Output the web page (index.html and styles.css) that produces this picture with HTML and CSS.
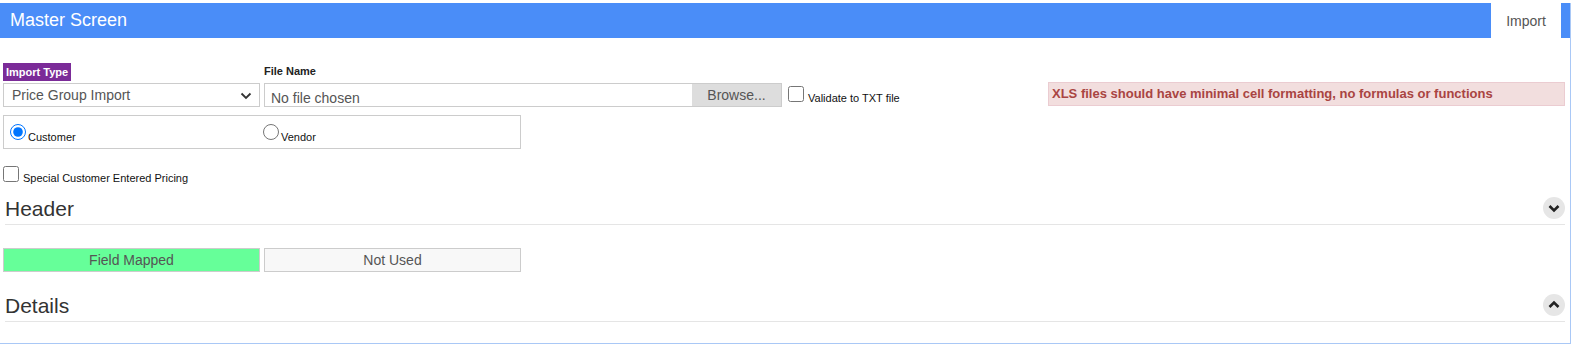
FILE: index.html
```html
<!DOCTYPE html>
<html>
<head>
<title>Master Screen</title>
<link rel="stylesheet" href="styles.css">
</head>
<body>
<div class="panel">
  <div class="panel-heading">
    <div class="panel-title">Master Screen</div>
    <div class="tab">Import</div>
  </div>
  <div class="panel-body">
    <div class="grid top-row">
      <div class="field">
        <span class="tag">Import Type</span>
        <div class="select">
          <span>Price Group Import</span>
          <svg class="caret" width="12" height="8" viewBox="0 0 12 8"><polyline points="1.5,1.5 6,6 10.5,1.5" fill="none" stroke="#333" stroke-width="1.8"/></svg>
        </div>
      </div>
      <div class="field span-2">
        <span class="field-label">File Name</span>
        <div class="file-input">
          <span class="file-text">No file chosen</span>
          <span class="browse">Browse...</span>
        </div>
      </div>
      <div class="check-cell">
        <label class="check"><input type="checkbox"><span>Validate to TXT file</span></label>
      </div>
      <div class="span-2 alert">XLS files should have minimal cell formatting, no formulas or functions</div>
    </div>

    <div class="grid">
      <div class="radio-box span-2">
        <label class="radio first"><input type="radio" name="party" checked><span>Customer</span></label>
        <label class="radio"><input type="radio" name="party"><span>Vendor</span></label>
      </div>
    </div>

    <label class="check special"><input type="checkbox"><span>Special Customer Entered Pricing</span></label>

    <div class="section">
      <h3>Header</h3>
      <span class="toggle"><svg width="22" height="22" viewBox="0 0 22 22"><polyline points="6.5,9 11,13.5 15.5,9" fill="none" stroke="#222" stroke-width="2.6"/></svg></span>
    </div>

    <div class="grid legend">
      <div class="legend-item mapped">Field Mapped</div>
      <div class="legend-item unused">Not Used</div>
    </div>

    <div class="section">
      <h3>Details</h3>
      <span class="toggle"><svg width="22" height="22" viewBox="0 0 22 22"><polyline points="6.5,13 11,8.5 15.5,13" fill="none" stroke="#222" stroke-width="2.6"/></svg></span>
    </div>
  </div>
</div>
</body>
</html>
```

FILE: styles.css
```css
/* page styles */
body {
  margin: 0;
  font-family: "Liberation Sans", Arial, sans-serif;
  color: #333;
  background: #fff;
}

.panel {
  margin-top: 3px;
  width: 1571px;
  height: 341px;
  border-right: 1px solid #a9c8f6;
  border-bottom: 1px solid #a9c8f6;
  box-sizing: border-box;
}

.panel-heading {
  height: 35px;
  background-color: #4a8df8;
  display: flex;
  justify-content: space-between;
  align-items: stretch;
}

.panel-title {
  color: #fff;
  font-size: 18px;
  line-height: 35px;
  padding-left: 10px;
}

.tab {
  background: #fff;
  color: #555;
  font-size: 14px;
  width: 70px;
  text-align: center;
  line-height: 36px;
  margin-right: 9px;
}

.panel-body {
  padding: 25px 5px 0 3px;
}

.grid {
  display: grid;
  grid-template-columns: repeat(6, 257px);
  column-gap: 4px;
}

.span-2 {
  grid-column: span 2;
}

.top-row {
  align-items: end;
}

.field {
  display: flex;
  flex-direction: column;
  align-items: flex-start;
}

.tag {
  background: #7b2b98;
  color: #fff;
  font-size: 11px;
  font-weight: bold;
  padding: 3px 3px 2px;
  line-height: 13px;
  margin-bottom: 2px;
}

.field-label {
  font-size: 11px;
  font-weight: bold;
  color: #222;
  margin-bottom: 5px;
  line-height: 13px;
}

.select {
  width: 100%;
  height: 24px;
  box-sizing: border-box;
  border: 1px solid #ccc;
  display: flex;
  align-items: center;
  justify-content: space-between;
  padding: 0 7px 0 8px;
  font-size: 14px;
  color: #555;
}

.caret {
  margin-top: 1px;
}

.file-input {
  width: 100%;
  height: 24px;
  box-sizing: border-box;
  border: 1px solid #ccc;
  display: flex;
  font-size: 14px;
  color: #555;
}

.file-text {
  flex: 1;
  padding: 6px 0 0 6px;
  line-height: 16px;
}

.browse {
  width: 89px;
  background: #ddd;
  text-align: center;
  line-height: 22px;
}

.check-cell {
  padding: 0 0 5px 2px;
}

.check {
  display: flex;
  align-items: flex-end;
  font-size: 11px;
  color: #111;
}

.check input {
  width: 16px;
  height: 16px;
  margin: 0 4px 0 0;
}

.check span {
  line-height: 12px;
  margin-bottom: -2px;
}

.alert {
  height: 24px;
  box-sizing: border-box;
  background: #f2dede;
  border: 1px solid #ebccd1;
  color: #a94442;
  font-size: 13px;
  font-weight: bold;
  line-height: 22px;
  padding-left: 3px;
  margin-left: 1px;
  margin-bottom: 1px;
}

.radio-box {
  margin-top: 8px;
  height: 34px;
  box-sizing: border-box;
  border: 1px solid #ccc;
  display: flex;
  padding-top: 8px;
}

.radio {
  display: flex;
  align-items: flex-end;
  font-size: 11px;
  color: #111;
  height: 16px;
}

.radio.first {
  width: 259px;
  padding-left: 6px;
  box-sizing: border-box;
}

.radio input {
  width: 16px;
  height: 16px;
  margin: 0 2px 0 0;
}

.radio span {
  line-height: 12px;
  margin-bottom: -3px;
}

.special {
  margin-top: 17px;
}

.section {
  display: flex;
  justify-content: space-between;
  align-items: center;
  border-bottom: 1px solid #e5e5e5;
  margin-left: 2px;
  height: 33px;
  margin-top: 9px;
}

.section h3 {
  margin: 0;
  font-size: 21px;
  font-weight: normal;
  color: #333;
  line-height: 24px;
  margin-top: 2px;
}

.toggle {
  width: 22px;
  height: 22px;
  border-radius: 50%;
  background: #e6e6e6;
  display: block;
  margin-right: 0;
}

.toggle svg {
  display: block;
}

.legend {
  margin-top: 23px;
}

.legend-item {
  height: 24px;
  box-sizing: border-box;
  border: 1px solid #ccc;
  text-align: center;
  font-size: 14px;
  color: #555;
  line-height: 22px;
}

.mapped {
  background: #66ff99;
}

.unused {
  background: #f8f8f8;
}

.legend + .section {
  margin-top: 16px;
}
```
